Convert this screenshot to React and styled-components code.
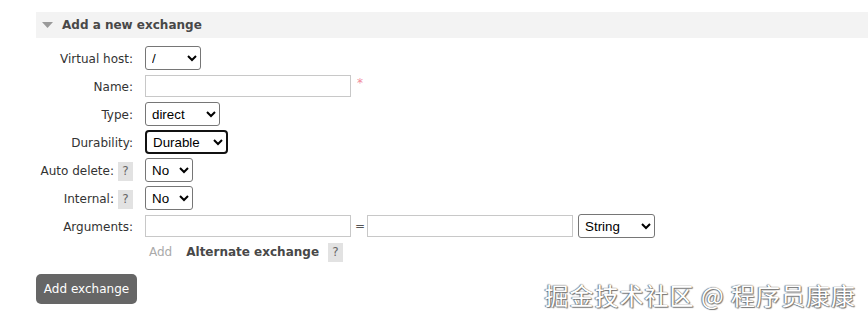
import React from "react";
import styled, { createGlobalStyle } from "styled-components";

const Global = createGlobalStyle`
  html, body { margin: 0; padding: 0; background: #fff; }
  body { font-family: "DejaVu Sans", Verdana, sans-serif; font-size: 12px; color: #484848; }
`;

const Page = styled.div`
  position: relative;
  width: 868px;
  height: 322px;
  padding: 12px 0 0 36px;
  box-sizing: border-box;
  overflow: hidden;
`;

const SectionHeader = styled.div`
  display: flex;
  align-items: center;
  gap: 9px;
  height: 26px;
  padding-left: 6px;
  background: #f3f3f3;
  font-weight: bold;
  font-size: 12px;
  color: #484848;
`;

const Form = styled.div`
  display: grid;
  grid-template-columns: 97px auto;
  column-gap: 12px;
  grid-auto-rows: 28px;
  margin-top: 6px;
  align-items: center;
`;

const Label = styled.div`
  display: flex;
  justify-content: flex-end;
  align-items: center;
  gap: 4px;
  padding-top: 2px;
  color: #333;
  white-space: nowrap;
`;

const Help = styled.span`
  display: inline-block;
  width: 15px;
  height: 19px;
  line-height: 19px;
  text-align: center;
  background: #e2e2e2;
  color: #666;
  font-size: 12px;
`;

const Cell = styled.div`
  display: flex;
  align-items: center;
  gap: 5px;
`;

const Select = styled.select`
  width: ${(p) => p.$w}px;
  height: 24px;
  font-family: "Liberation Sans", Arial, sans-serif;
  font-size: 13.33px;
  color: #000;
  background: #fff;
  border: ${(p) => (p.$focus ? "2px solid #111" : "1px solid #767676")};
  border-radius: ${(p) => (p.$focus ? 4 : 3)}px;
  padding: 0 2px;
  margin: 0;
  outline: none;
`;

const Input = styled.input`
  width: 206px;
  height: 22px;
  box-sizing: border-box;
  border: 1px solid #c8c8c8;
  margin: 0;
  padding: 0 4px;
`;

const Required = styled.span`
  color: #f08a9a;
  font-size: 12px;
  margin-top: -6px;
  margin-left: 1px;
`;

const Eq = styled.span`
  color: #555;
  font-size: 12px;
  margin: 0 -3px 0 -1px;
`;

const AddRow = styled.div`
  grid-column: 2;
  display: flex;
  align-items: center;
  height: 24px;
  margin-top: -4px;
  padding-left: 4px;
`;

const AddLink = styled.span`
  color: #aaa;
  margin-right: 14px;
`;

const Alt = styled.span`
  font-weight: bold;
  color: #484848;
  margin-right: 9px;
`;

const Button = styled.button`
  margin-top: 6px;
  width: 101px;
  height: 30px;
  border: none;
  border-radius: 5px;
  background: #666;
  color: #fff;
  font-family: "DejaVu Sans", Verdana, sans-serif;
  font-size: 12px;
  padding: 0;
`;

const Watermark = styled.div`
  position: absolute;
  right: 12px;
  bottom: 10px;
  font-family: "Noto Sans CJK SC", sans-serif;
  font-size: 24px;
  color: #fff;
  text-shadow: 0 0 1px #555, 1px 1px 1px #777, -1px 0 1px #888;
  letter-spacing: 1px;
`;

const Triangle = () => (
  <svg width="11" height="7" viewBox="0 0 11 7">
    <polygon points="0,0 11,0 5.5,6" fill="#9a9a9a" />
  </svg>
);

export default function App() {
  return (
    <>
      <Global />
      <Page>
        <SectionHeader>
          <Triangle />
          Add a new exchange
        </SectionHeader>
        <Form>
          <Label>Virtual host:</Label>
          <Cell>
            <Select $w={56} defaultValue="/">
              <option>/</option>
            </Select>
          </Cell>

          <Label>Name:</Label>
          <Cell>
            <Input type="text" />
            <Required>*</Required>
          </Cell>

          <Label>Type:</Label>
          <Cell>
            <Select $w={75} defaultValue="direct">
              <option>direct</option>
              <option>fanout</option>
              <option>headers</option>
              <option>topic</option>
            </Select>
          </Cell>

          <Label>Durability:</Label>
          <Cell>
            <Select $w={83} $focus defaultValue="Durable">
              <option>Durable</option>
              <option>Transient</option>
            </Select>
          </Cell>

          <Label>
            Auto delete: <Help>?</Help>
          </Label>
          <Cell>
            <Select $w={48} defaultValue="No">
              <option>No</option>
              <option>Yes</option>
            </Select>
          </Cell>

          <Label>
            Internal: <Help>?</Help>
          </Label>
          <Cell>
            <Select $w={48} defaultValue="No">
              <option>No</option>
              <option>Yes</option>
            </Select>
          </Cell>

          <Label>Arguments:</Label>
          <Cell>
            <Input type="text" />
            <Eq>=</Eq>
            <Input type="text" />
            <Select $w={77} defaultValue="String">
              <option>String</option>
              <option>Number</option>
              <option>Boolean</option>
              <option>List</option>
            </Select>
          </Cell>

          <AddRow>
            <AddLink>Add</AddLink>
            <Alt>Alternate exchange</Alt>
            <Help>?</Help>
          </AddRow>
        </Form>
        <Button>Add exchange</Button>
        <Watermark>掘金技术社区 @ 程序员康康</Watermark>
      </Page>
    </>
  );
}
